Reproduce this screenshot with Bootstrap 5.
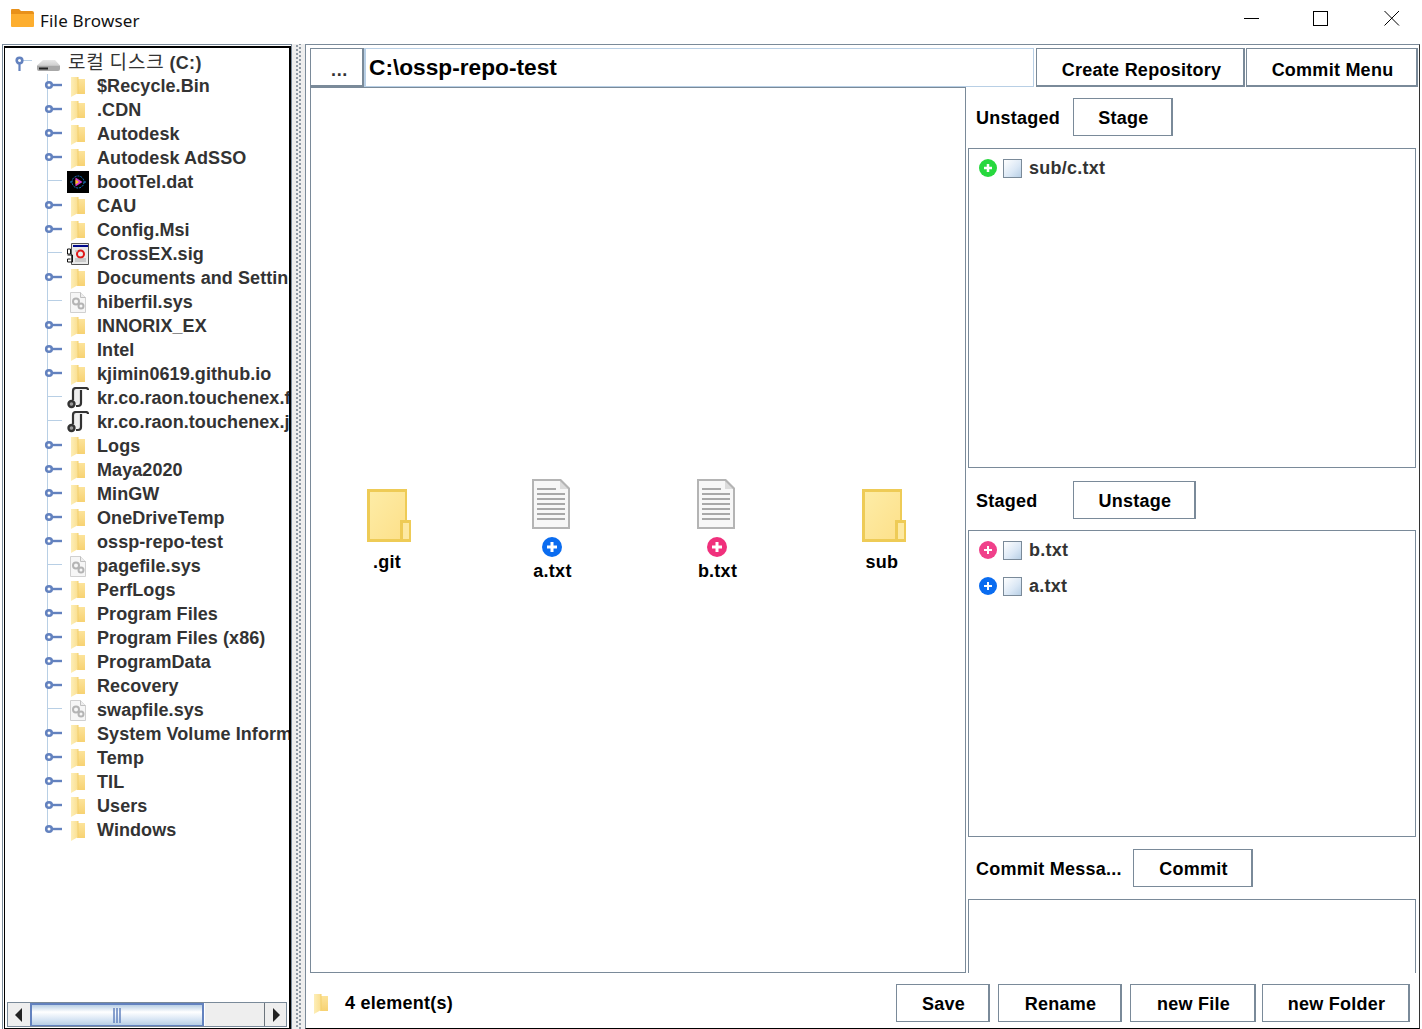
<!DOCTYPE html>
<html lang="en">
<head>
    <meta charset="UTF-8">
    <title>File Browser</title>
    <link href="https://cdn.jsdelivr.net/npm/bootstrap@5.3.0/dist/css/bootstrap.min.css" rel="stylesheet">
    <script src="https://cdn.jsdelivr.net/npm/bootstrap@5.3.0/dist/js/bootstrap.bundle.min.js"></script>
    <style>
        html, body { height: 100%; }
        body { width: 1422px; height: 1029px; overflow: hidden; background: #fff; font-family: "Liberation Sans", Arial, sans-serif; font-weight: 700; font-size: 18px; color: #000; line-height: 1.2; letter-spacing: .25px; }
        .title-bar { height: 44px; padding-left: 11px; }
        .title-text { font-family: "Noto Sans", sans-serif; font-weight: 400; font-size: 17px; margin-left: 6px; margin-top: 11px; color: #111; letter-spacing: .2px; }
        .win-ctl { margin-top: 10px; flex: none; }
        .main-area { height: 985px; padding-left: 2px; }

        .tree-outer { width: 290px; border: 1px solid #7a8a99; border-bottom: 0; padding: 1px 0 0 1px; flex: none; }
        .tree-box { border: 2px solid #000; border-bottom-width: 1px; border-left-width: 1px; height: 100%; padding-top: 2px; overflow: hidden; }
        .tree-row { height: 24px; white-space: nowrap; color: #333; letter-spacing: .07px; background: linear-gradient(#b8cfe5, #b8cfe5) 42px 0 / 1px 100% no-repeat; }
        .tree-row.last-row { background-size: 1px 42%; }
        .tree-row.root-row { background: none; }
        .tree-knob { width: 20px; margin-left: 38px; flex: none; }
        .tree-icon { width: 26px; margin-left: 2px; margin-right: 6px; flex: none; }
        .tree-name { padding-top: 2px; }
        .root-knob { width: 22px; margin-left: 9px; flex: none; }
        .root-icon { margin: 6px 8px 0 1px; flex: none; }
        .root-label { font-weight: 400; font-family: "Noto Sans CJK KR", "Liberation Sans", sans-serif; font-size: 19px; letter-spacing: .8px; padding-top: 1px; }
        .root-label b { font-family: "Liberation Sans", sans-serif; font-weight: 700; font-size: 18px; letter-spacing: .3px; }
        .tree-scroll { height: 25px; margin: auto 2px 1px 2px; border: 1px solid #7a8a99; flex: none; }
        .tree-fill { min-height: 0; }
        .arrow-btn { width: 22px; background: #eee; }
        .thumb { width: 174px; border: 2px solid #6382bf; border-bottom-width: 1px; background: linear-gradient(#b8cfe5, #fff 35%, #dae7f5 70%, #b8cfe5); }
        .track { background: #eee; border-left: 1px solid #fff; }

        .splitter { width: 13px; flex: none; background-color: #eee; background-image: radial-gradient(circle, #8f9aa5 1px, transparent 1.2px), radial-gradient(circle, #8f9aa5 1px, transparent 1.2px); background-size: 4px 4px, 4px 4px; background-position: 3px 0, 6px 2px; background-repeat: repeat-y; }

        .right-area { width: 1115px; flex: none; border-top: 1px solid #7a8a99; border-left: 1px solid #7a8a99; border-right: 1px solid #333; border-bottom: 1px solid #000; padding: 3px 0 0 4px; }
        .path-row { height: 39px; width: 1108px; flex: none; }
        .ui-btn { background: #fff; border: 1px solid #7a8a99; border-radius: 0; font-weight: 700; font-size: 18px; color: #000; padding: 0; display: flex; align-items: center; justify-content: center; letter-spacing: .25px; }
        .dots-btn { width: 54px; border-width: 1px 2px 2px 1px; color: #333; padding: 8px 0 0 6px; letter-spacing: .7px; }
        .path-field { width: 670px; border: 1px solid #b8cfe5; border-left-width: 2px; padding-left: 3px; font-size: 22.7px; letter-spacing: 0; }
        .repo-btn { width: 209px; margin-left: 2px; border-width: 1px 2px 2px 1px; padding: 8px 0 0 3px; }
        .menu-btn { width: 172px; margin-left: 1px; border-width: 1px 2px 2px 1px; padding: 8px 0 0 2px; }

        .work-row { height: 886px; flex: none; width: 1108px; }
        .file-canvas { width: 656px; flex: none; border: 1px solid #7a8a99; padding: 2px 0 0 16px; }
        .file-cell { width: 120px; margin-right: 45px; text-align: center; flex: none; }
        .big-icon, .doc-icon { display: block; margin-left: 40px; }
        .big-name { margin-top: 9px; }
        .doc-name { margin-top: 4px; padding-left: 1px; }
        .side-panel { width: 452px; flex: none; padding-left: 2px; }
        .side-head { height: 38px; padding-left: 8px; flex: none; }
        .side-label { width: 97px; flex: none; padding-top: 4px; }
        .stage-list { border: 1px solid #7a8a99; width: 448px; flex: none; padding: 1px 0 0 10px; color: #333; }
        .stage-row { height: 36px; }
        .stage-name { padding-top: 2px; }
        .check-box { width: 19px; height: 19px; border: 1px solid #7a8a99; margin: 0 7px 0 6px; background: linear-gradient(135deg, #fff, #dae7f5 60%, #b8cfe5); flex: none; }
        .commit-area { border: 1px solid #7a8a99; border-bottom: 0; height: 74px; width: 448px; flex: none; }

        .bottom-bar { height: 55px; flex: none; width: 1108px; padding: 5px 0 0 4px; }
        .status-text { margin-left: 17px; padding-top: 2px; }
        .low-btn { height: 38px; padding: 4px 0 0 2px; border-right-width: 2px; }
    </style>
</head>
<body>
    <svg width="0" height="0" class="position-absolute">
        <defs>
            <linearGradient id="treeFold" x1="0" x2="1" y1="0" y2="0">
                <stop offset="0" stop-color="#fdeeb8"/><stop offset="1" stop-color="#fadf90"/>
            </linearGradient>
            <linearGradient id="treeBack" x1="0" x2="0" y1="0" y2="1">
                <stop offset="0" stop-color="#fce39a"/><stop offset="1" stop-color="#f7d272"/>
            </linearGradient>
            <linearGradient id="bigFold" x1="0" x2="1" y1="0" y2="1">
                <stop offset="0" stop-color="#fdeca6"/><stop offset="1" stop-color="#fde08a"/>
            </linearGradient>
            <linearGradient id="driveTop" x1="0" x2="0" y1="0" y2="1">
                <stop offset="0" stop-color="#e8e8e8"/><stop offset="1" stop-color="#cfcfcf"/>
            </linearGradient>
        </defs>
        <symbol id="i-fold" viewBox="0 0 14 21">
            <path d="M6 3h8v15H6z" fill="url(#treeBack)"/>
            <path d="M0 1h7v16l-7 4z" fill="url(#treeFold)"/>
            <path d="M7 1v16" stroke="#f3cf6a"/>
        </symbol>
        <symbol id="i-big" viewBox="0 0 44 54">
            <rect x="0" y="0" width="40" height="53" fill="#eecb56"/>
            <rect x="3" y="3" width="35" height="47" fill="url(#bigFold)"/>
            <rect x="33" y="31" width="11" height="22" fill="#eecb56"/>
            <rect x="36" y="34" width="6" height="16" fill="#fde9a2"/>
        </symbol>
        <symbol id="i-doc" viewBox="0 0 38 50">
            <path d="M0 0h29l9 9v41H0z" fill="#b4b4b4"/>
            <path d="M2 2h26v8h8v38H2z" fill="#f7f7f7"/>
            <path d="M28 2l8 8h-8z" fill="#dcdcdc"/>
            <g fill="#a8a8a8">
                <rect x="5" y="9" width="19" height="2"/><rect x="5" y="14" width="28" height="2"/>
                <rect x="5" y="19" width="28" height="2"/><rect x="5" y="24" width="28" height="2"/>
                <rect x="5" y="29" width="28" height="2"/><rect x="5" y="34" width="28" height="2"/>
                <rect x="5" y="39" width="28" height="2"/>
            </g>
        </symbol>
        <symbol id="i-dat" viewBox="0 0 22 22">
            <rect width="22" height="22" fill="#000"/>
            <circle cx="11" cy="11" r="6" fill="none" stroke="#1a7fd0" stroke-width="1" stroke-dasharray="2 1"/>
            <path d="M8.500 6.500l7 4.500-7 4.500z" fill="#d63bd0"/>
            <path d="M8.500 8.500l3.500 2.500-3.500 2.500z" fill="#f5c518"/>
            <path d="M3 11h2M17 11h2" stroke="#1a7fd0"/>
        </symbol>
        <symbol id="i-sig" viewBox="0 0 22 22">
            <path d="M4.500.5h17v21h-17z" fill="#e9e9e9" stroke="#555"/>
            <rect x="6" y="2" width="15" height="2" fill="#000a8c"/>
            <circle cx="13.500" cy="11" r="3.500" fill="none" stroke="#e01818" stroke-width="2"/>
            <path d="M8 8h3M8 16h11M8 18h11" stroke="#aaa"/>
            <path d="M.5 6h3v5h-3zM.5 12h5v7h-5v-3h3" fill="none" stroke="#111"/>
        </symbol>
        <symbol id="i-sys" viewBox="0 0 16 21">
            <path d="M.5.5h10l5 5v15H.5z" fill="#f6f6f6" stroke="#d0d0d0"/>
            <path d="M10.500.5v5h5" fill="#eee" stroke="#c0c0c0"/>
            <circle cx="6" cy="9.500" r="3" fill="none" stroke="#b4b4b4" stroke-width="2"/>
            <circle cx="11" cy="14" r="2.500" fill="none" stroke="#b4b4b4" stroke-width="2"/>
        </symbol>
        <symbol id="i-scroll" viewBox="0 0 22 22">
            <path d="M7 3h13v-.5a2 2 0 0 0-2-1.500H9C7 1 6 2 6 4v9l5 6c2 0 3-1 3-3V3z" fill="#eee"/>
            <path d="M6 13V4c0-2 1-3 3-3h10c1 0 2 1 2 2M14 3v13c0 2-1 3-3 3H9" fill="none" stroke="#333" stroke-width="2.200"/>
            <circle cx="4.500" cy="17" r="3" fill="#999" stroke="#333" stroke-width="2.400"/>
        </symbol>
        <symbol id="i-knob" viewBox="0 0 20 24">
            <path d="M9 11h10" stroke="#6382bf" stroke-width="2.400"/>
            <circle cx="6" cy="11" r="2.800" fill="#fff" stroke="#6382bf" stroke-width="2.600"/>
        </symbol>
        <symbol id="i-leaf" viewBox="0 0 20 24">
            <path d="M4 10.500h15" stroke="#b8cfe5"/>
        </symbol>
    </svg>

    <div class="title-bar d-flex align-items-start">
        <svg width="23" height="20" viewBox="0 0 23 20" class="mt-2 flex-none">
            <path d="M0 2a1 1 0 0 1 1-1h7l2 2h11a2 2 0 0 1 2 2v3H0z" fill="#e8911a"/>
            <path d="M0 6h23v12a1 1 0 0 1-1 1H1a1 1 0 0 1-1-1z" fill="#fdae2f"/>
        </svg>
        <span class="title-text">File Browser</span>
        <svg class="win-ctl ms-auto" width="16" height="16"><path d="M0 8.500h15" stroke="#000"/></svg>
        <svg class="win-ctl" style="margin-left:53px" width="16" height="16"><rect x=".5" y="1.500" width="14" height="14" fill="none" stroke="#000"/></svg>
        <svg class="win-ctl" style="margin-left:55px;margin-right:22px" width="16" height="16"><path d="M.5 1l14.500 14.500M15 1L.5 15.500" stroke="#000"/></svg>
    </div>

    <div class="main-area d-flex">
        <div class="tree-outer">
            <div class="tree-box d-flex flex-column">
                <div class="tree-fill flex-grow-1 overflow-hidden" id="treeList"></div>
                <div class="tree-scroll d-flex">
                    <div class="arrow-btn d-flex align-items-center justify-content-center">
                        <svg width="8" height="14"><path d="M7 0v14L0 7z" fill="#222"/></svg>
                    </div>
                    <div class="thumb d-flex align-items-center justify-content-center">
                        <svg width="9" height="15"><path d="M1 0v15M4 0v15M7 0v15" stroke="#6382bf" stroke-width="1.500"/></svg>
                    </div>
                    <div class="track flex-grow-1"></div>
                    <div class="arrow-btn d-flex align-items-center justify-content-center border-start border-secondary">
                        <svg width="8" height="14"><path d="M1 0v14l7-7z" fill="#222"/></svg>
                    </div>
                </div>
            </div>
        </div>

        <div class="splitter"></div>

        <div class="right-area d-flex flex-column">
            <div class="path-row d-flex">
                <button class="ui-btn dots-btn">...</button>
                <div class="path-field d-flex align-items-center">C:\ossp-repo-test</div>
                <button class="ui-btn repo-btn">Create Repository</button>
                <button class="ui-btn menu-btn">Commit Menu</button>
            </div>

            <div class="work-row d-flex">
                <div class="file-canvas d-flex align-items-center">
                    <div class="file-cell">
                        <svg width="44" height="54" class="big-icon"><use href="#i-big"/></svg>
                        <div class="big-name">.git</div>
                    </div>
                    <div class="file-cell">
                        <svg width="38" height="50" class="doc-icon"><use href="#i-doc"/></svg>
                        <svg width="20" height="20" viewBox="0 0 20 20" class="d-block mx-auto mt-2"><circle cx="10" cy="10" r="10" fill="#0a6cf0"/><path d="M10 5v10M5 10h10" stroke="#fff" stroke-width="3"/></svg>
                        <div class="doc-name">a.txt</div>
                    </div>
                    <div class="file-cell">
                        <svg width="38" height="50" class="doc-icon"><use href="#i-doc"/></svg>
                        <svg width="20" height="20" viewBox="0 0 20 20" class="d-block mx-auto mt-2"><circle cx="10" cy="10" r="10" fill="#f0307c"/><path d="M10 5v10M5 10h10" stroke="#fff" stroke-width="3"/></svg>
                        <div class="doc-name">b.txt</div>
                    </div>
                    <div class="file-cell">
                        <svg width="44" height="54" class="big-icon"><use href="#i-big"/></svg>
                        <div class="big-name">sub</div>
                    </div>
                </div>

                <div class="side-panel d-flex flex-column">
                    <div class="side-head d-flex align-items-center" style="margin-top:11px">
                        <span class="side-label">Unstaged</span>
                        <button class="ui-btn low-btn" style="width:100px">Stage</button>
                    </div>
                    <div class="stage-list" style="height:320px;margin-top:12px">
                        <div class="stage-row d-flex align-items-center">
                            <svg width="18" height="18" viewBox="0 0 18 18"><circle cx="9" cy="9" r="9" fill="#27d83e"/><path d="M9 5v8M5 9h8" stroke="#fff" stroke-width="2.500"/></svg>
                            <span class="check-box"></span><span class="stage-name">sub/c.txt</span>
                        </div>
                    </div>
                    <div class="side-head d-flex align-items-center" style="margin-top:13px">
                        <span class="side-label">Staged</span>
                        <button class="ui-btn low-btn" style="width:123px">Unstage</button>
                    </div>
                    <div class="stage-list" style="height:307px;margin-top:11px">
                        <div class="stage-row d-flex align-items-center">
                            <svg width="18" height="18" viewBox="0 0 18 18"><circle cx="9" cy="9" r="9" fill="#f0408a"/><path d="M9 5v8M5 9h8" stroke="#fff" stroke-width="2"/></svg>
                            <span class="check-box"></span><span class="stage-name">b.txt</span>
                        </div>
                        <div class="stage-row d-flex align-items-center">
                            <svg width="18" height="18" viewBox="0 0 18 18"><circle cx="9" cy="9" r="9" fill="#0a6cf0"/><path d="M9 5v8M5 9h8" stroke="#fff" stroke-width="2"/></svg>
                            <span class="check-box"></span><span class="stage-name">a.txt</span>
                        </div>
                    </div>
                    <div class="side-head d-flex align-items-center" style="margin-top:12px">
                        <span class="side-label" style="width:157px">Commit Messa...</span>
                        <button class="ui-btn low-btn" style="width:120px">Commit</button>
                    </div>
                    <div class="commit-area" style="margin-top:12px"></div>
                </div>
            </div>

            <div class="bottom-bar d-flex align-items-center">
                <svg width="14" height="21"><use href="#i-fold"/></svg>
                <span class="status-text">4 element(s)</span>
                <button class="ui-btn low-btn ms-auto" style="width:94px">Save</button>
                <button class="ui-btn low-btn" style="width:124px;margin-left:8px">Rename</button>
                <button class="ui-btn low-btn" style="width:126px;margin-left:8px">new File</button>
                <button class="ui-btn low-btn" style="width:148px;margin-left:6px;margin-right:8px">new Folder</button>
            </div>
        </div>
    </div>

    <script>
        const items = [
            ['$Recycle.Bin', 'fold'], ['.CDN', 'fold'], ['Autodesk', 'fold'], ['Autodesk AdSSO', 'fold'],
            ['bootTel.dat', 'dat'], ['CAU', 'fold'], ['Config.Msi', 'fold'], ['CrossEX.sig', 'sig'],
            ['Documents and Settings', 'fold'], ['hiberfil.sys', 'sys'], ['INNORIX_EX', 'fold'], ['Intel', 'fold'],
            ['kjimin0619.github.io', 'fold'], ['kr.co.raon.touchenex.firefox', 'scroll'], ['kr.co.raon.touchenex.json', 'scroll'],
            ['Logs', 'fold'], ['Maya2020', 'fold'], ['MinGW', 'fold'], ['OneDriveTemp', 'fold'], ['ossp-repo-test', 'fold'],
            ['pagefile.sys', 'sys'], ['PerfLogs', 'fold'], ['Program Files', 'fold'], ['Program Files (x86)', 'fold'],
            ['ProgramData', 'fold'], ['Recovery', 'fold'], ['swapfile.sys', 'sys'], ['System Volume Information', 'fold'],
            ['Temp', 'fold'], ['TIL', 'fold'], ['Users', 'fold'], ['Windows', 'fold']
        ];
        const sizes = { fold: [14, 21], dat: [22, 22], sig: [22, 22], sys: [16, 21], scroll: [22, 22] };

        const rootRow = `
            <div class="tree-row root-row d-flex align-items-center">
                <svg class="root-knob" width="22" height="24" viewBox="0 0 22 24">
                    <path d="M5.500 14v7" stroke="#6382bf" stroke-width="2.200"/>
                    <path d="M9 10.500h9" stroke="#b8cfe5"/>
                    <circle cx="5.500" cy="10.500" r="2.800" fill="#fff" stroke="#6382bf" stroke-width="2.600"/>
                </svg>
                <svg class="root-icon" width="23" height="13" viewBox="0 0 23 13">
                    <path d="M0 6.500L6 1h12l5 5.500z" fill="url(#driveTop)"/>
                    <path d="M0 6.500h23V10a2 2 0 0 1-2 2H2a2 2 0 0 1-2-2z" fill="#a8a8a8"/>
                    <path d="M2 9.500h9" stroke="#222" stroke-width="2"/>
                </svg>
                <span class="root-label">로컬 디스크 <b>(C:)</b></span>
            </div>`;

        document.getElementById('treeList').innerHTML = rootRow + items.map((item, index) => {
            const knob = item[1] === 'fold' ? 'i-knob' : 'i-leaf';
            const size = sizes[item[1]];
            const last = index === items.length - 1 ? ' last-row' : '';
            return `
                <div class="tree-row${last} d-flex align-items-center">
                    <svg class="tree-knob" height="24" viewBox="0 0 20 24"><use href="#${knob}"/></svg>
                    <span class="tree-icon d-flex justify-content-center">
                        <svg width="${size[0]}" height="${size[1]}"><use href="#i-${item[1]}"/></svg>
                    </span>
                    <span class="tree-name">${item[0]}</span>
                </div>`;
        }).join('');
    </script>
</body>
</html>
